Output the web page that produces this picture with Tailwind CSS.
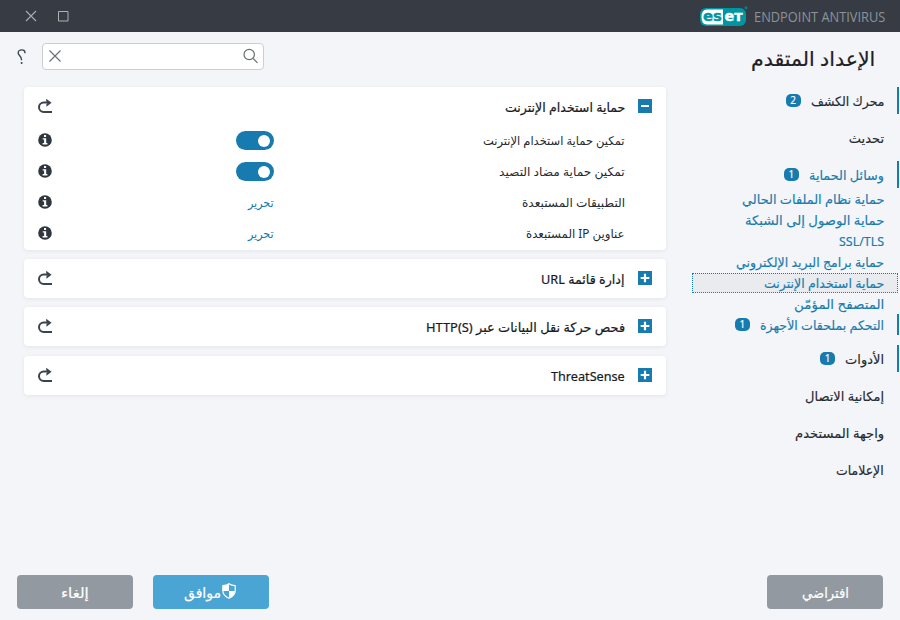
<!DOCTYPE html>
<html lang="ar" dir="rtl">
<head>
  <meta charset="UTF-8"/>
  <meta name="viewport" content="width=device-width, initial-scale=1.0"/>
  <title>ESET Endpoint Antivirus</title>
  <script src="https://cdn.jsdelivr.net/npm/@tailwindcss/browser@4"></script>
</head>
<body class="bg-[#f3f5f8] h-[620px] w-[900px] overflow-hidden flex flex-col text-[#252a30] text-[13px] font-['Noto_Sans','DejaVu_Sans',sans-serif]">

  <!-- Shared icons -->
  <svg class="hidden">
    <symbol id="reset" viewBox="0 0 14 16">
      <path d="M14 14H5.7A4.7 4.7 0 0 1 5.7 4.6H11" fill="none" stroke="#3b444d" stroke-width="2"/>
      <path d="M8.2 .8L13.6 4.8L8.4 8.8V6L10 4.8L8.2 3.2Z" fill="#3b444d"/>
    </symbol>
    <symbol id="info" viewBox="0 0 14 14">
      <circle cx="7" cy="7" r="6.8" fill="#30363d"/>
      <path d="M6 2h2.1v2H6zM4.7 5.2h3.5v4.9h1.2v1.4H4.6v-1.4h1.5V6.6H4.7z" fill="#fff"/>
    </symbol>
    <symbol id="plus" viewBox="0 0 14 14">
      <path d="M0 0h14v14H0z" fill="#177baf"/>
      <path d="M2.7 7h8.6M7 2.7v8.6" stroke="#fff" stroke-width="2.2"/>
    </symbol>
  </svg>

  <!-- Title bar -->
  <header class="h-8 shrink-0 bg-[#373c44] flex items-center justify-between pr-[15px] pl-[25px]">
    <div class="flex items-center gap-[5px]">
      <span dir="ltr" class="pt-px font-['Open_Sans'] text-[14px] text-[#8d9299]" data-w="131">ENDPOINT ANTIVIRUS</span>
      <svg class="w-[50px] h-5 [direction:ltr]" viewBox="0 0 50 20">
        <rect x="1" y="2" width="46" height="18" rx="6" fill="#0096a1"/>
        <path d="M8 3.5H24V18.5H8Q2.5 18.5 2.5 11T8 3.5Z" fill="#fff"/>
        <circle cx="47" cy="1.8" r="1.5" fill="#0c7e88"/>
        <text x="4" y="15" textLength="19" lengthAdjust="spacingAndGlyphs" font-family="DejaVu Sans" font-weight="bold" font-size="14" fill="#0096a1" stroke="#0096a1" stroke-width=".4">es</text>
        <text x="25.5" y="15" textLength="18" lengthAdjust="spacingAndGlyphs" font-family="DejaVu Sans" font-weight="bold" font-size="14" fill="#fff" stroke="#fff" stroke-width=".4">eт</text>
      </svg>
    </div>
    <div class="flex items-center gap-[21px]">
      <svg class="size-[11px]" viewBox="0 0 11 11"><path d="M.5.5h9.5v9.5H.5z" fill="none" stroke="#b0b2b0"/></svg>
      <svg class="size-[12px]" viewBox="0 0 12 12"><path d="M1 1l10 10M11 1L1 11" stroke="#a9aba8" stroke-width="1.2"/></svg>
    </div>
  </header>

  <div class="flex flex-1">
    <!-- Navigation -->
    <aside class="w-[210px] shrink-0 flex flex-col">
      <h1 class="h-[55px] pr-[25px] pt-[12px] text-[20px] leading-[30px] text-[#1d2024] [-webkit-text-stroke:0.2px]"><span data-w="124">الإعداد المتقدم</span></h1>
      <nav class="flex flex-col gap-[10px] mr-px [-webkit-text-stroke:0.15px]">
        <a class="h-[27px] flex items-center gap-[10px] border-r-2 border-[#177baf] pr-[13px] pt-[3px]"><span data-w="73">محرك الكشف</span><b class="w-[15px] h-[13px] mb-1 rounded-[5px] bg-[#177baf] text-white text-[10px] leading-[13px] text-center font-normal">2</b></a>
        <a class="h-[27px] flex items-center pr-[15px] pt-0.5"><span data-w="35">تحديث</span></a>
        <div class="text-[#177baf]">
          <a class="h-[27px] flex items-center gap-[10px] border-r-2 border-[#177baf] pr-[13px] pt-[3px]"><span data-w="75">وسائل الحماية</span><b class="w-[15px] h-[13px] mb-1 rounded-[5px] bg-[#177baf] text-white text-[10px] leading-[13px] text-center font-normal">1</b></a>
          <a class="h-[21px] flex items-center pr-[15px] pt-0.5"><span data-w="142">حماية نظام الملفات الحالي</span></a>
          <a class="h-[21px] flex items-center pr-[15px] pt-0.5"><span data-w="139">حماية الوصول إلى الشبكة</span></a>
          <a class="h-[21px] flex items-center pr-[15px] pt-0.5"><span data-w="45">SSL/TLS</span></a>
          <a class="h-[21px] flex items-center pr-[15px] pt-0.5"><span data-w="148">حماية برامج البريد الإلكتروني</span></a>
          <a class="h-[20px] mt-px mr-px w-[206px] flex items-center pr-[13px] pt-px border border-dotted border-[#177baf] bg-[#e9ebee]"><span data-w="120">حماية استخدام الإنترنت</span></a>
          <a class="h-[21px] flex items-center pr-[15px] pt-0.5"><span data-w="90">المتصفح المؤمّن</span></a>
          <a class="h-[21px] flex items-center gap-[10px] border-r-2 border-[#177baf] pr-[13px] pt-[3px]"><span data-w="124">التحكم بملحقات الأجهزة</span><b class="w-[15px] h-[13px] mb-1 rounded-[5px] bg-[#177baf] text-white text-[10px] leading-[13px] text-center font-normal">1</b></a>
        </div>
        <a class="h-[27px] flex items-center gap-[10px] border-r-2 border-[#177baf] pr-[13px] pt-[3px]"><span data-w="39">الأدوات</span><b class="w-[15px] h-[13px] mb-1 rounded-[5px] bg-[#177baf] text-white text-[10px] leading-[13px] text-center font-normal">1</b></a>
        <a class="h-[27px] flex items-center pr-[15px] pt-0.5"><span data-w="79">إمكانية الاتصال</span></a>
        <a class="h-[27px] flex items-center pr-[15px] pt-0.5"><span data-w="89">واجهة المستخدم</span></a>
        <a class="h-[27px] flex items-center pr-[15px] pt-0.5"><span data-w="48">الإعلامات</span></a>
      </nav>
    </aside>

    <!-- Settings -->
    <main class="w-[642px] mr-6 flex flex-col">
      <div class="h-[55px] flex justify-end items-start gap-4 pt-[11px] -ml-[7px]">
        <div class="w-[222px] h-[27px] bg-white border border-[#ccced0] rounded-[4px] flex items-center justify-between px-[5px] pb-0.5">
          <svg class="size-4" viewBox="0 0 16 16" fill="none" stroke="#686b6e" stroke-width="1.2"><circle cx="7.2" cy="6.5" r="5.2"/><path d="M11 10.3L15.5 14.8"/></svg>
          <svg class="size-[13px]" viewBox="0 0 13 13"><path d="M1.5 1.5l11 11M12.5 1.5L1.5 12.5" stroke="#6c6f72" stroke-width="1.2"/></svg>
        </div>
        <svg class="w-[9px] h-4 mt-[6px]" viewBox="0 0 9 16"><path d="M8 4.3C8.1 1.7 6.7.9 4.8.9C2.5.9 1.2 2.1 1.2 4C1.2 6.9 4.6 6.4 4.6 11.2" fill="none" stroke="#3b4650" stroke-width="1.4"/><circle cx="4.6" cy="14" r="1" fill="#3b4650"/></svg>
      </div>

      <section class="h-[163px] bg-white rounded-[4px] shadow-[0_1px_4px_rgba(0,0,0,0.07)] px-[14px]">
        <div class="h-[38px] flex items-center gap-[13px]">
          <svg class="size-[14px]" viewBox="0 0 14 14"><path d="M0 0h14v14H0z" fill="#177baf"/><path d="M3 7h8" stroke="#fff" stroke-width="2"/></svg>
          <h2 class="pt-[3px] text-[#171a1e] [-webkit-text-stroke:0.2px]"><span data-w="120">حماية استخدام الإنترنت</span></h2>
          <svg class="w-[14px] h-4 mr-auto"><use href="#reset"/></svg>
        </div>
        <div class="h-[31px] flex items-center pr-[27px] text-[12px]">
          <div class="w-[351px]"><span data-w="142">تمكين حماية استخدام الإنترنت</span></div>
          <div class="w-[38px] h-[19px] rounded-full bg-[#177baf] flex items-center pr-1"><i class="size-3 rounded-full bg-white"></i></div>
          <svg class="size-[14px] mr-auto mb-px"><use href="#info"/></svg>
        </div>
        <div class="h-[31px] flex items-center pr-[27px] text-[12px]">
          <div class="w-[351px]"><span data-w="126">تمكين حماية مضاد التصيد</span></div>
          <div class="w-[38px] h-[19px] rounded-full bg-[#177baf] flex items-center pr-1"><i class="size-3 rounded-full bg-white"></i></div>
          <svg class="size-[14px] mr-auto mb-px"><use href="#info"/></svg>
        </div>
        <div class="h-[31px] flex items-center pr-[27px] text-[12px]">
          <div class="w-[351px]"><span data-w="103">التطبيقات المستبعدة</span></div>
          <a class="text-[#177baf]"><span data-w="26">تحرير</span></a>
          <svg class="size-[14px] mr-auto mb-px"><use href="#info"/></svg>
        </div>
        <div class="h-[31px] flex items-center pr-[27px] text-[12px]">
          <div class="w-[351px]"><span data-w="99">عناوين IP المستبعدة</span></div>
          <a class="text-[#177baf]"><span data-w="26">تحرير</span></a>
          <svg class="size-[14px] mr-auto mb-px"><use href="#info"/></svg>
        </div>
      </section>

      <section class="h-[39px] mt-[9px] bg-white rounded-[4px] shadow-[0_1px_4px_rgba(0,0,0,0.07)] px-[14px] flex items-center gap-[13px] text-[#171a1e]">
        <svg class="size-[14px] mb-px"><use href="#plus"/></svg>
        <h2 class="pt-[3px] [-webkit-text-stroke:0.2px]"><span data-w="84">إدارة قائمة URL</span></h2>
        <svg class="w-[14px] h-4 mr-auto mb-px"><use href="#reset"/></svg>
      </section>
      <section class="h-[39px] mt-[9px] bg-white rounded-[4px] shadow-[0_1px_4px_rgba(0,0,0,0.07)] px-[14px] flex items-center gap-[13px] text-[#171a1e]">
        <svg class="size-[14px] mb-px"><use href="#plus"/></svg>
        <h2 class="pt-[3px] [-webkit-text-stroke:0.2px]"><span data-w="199">فحص حركة نقل البيانات عبر HTTP(S)</span></h2>
        <svg class="w-[14px] h-4 mr-auto mb-px"><use href="#reset"/></svg>
      </section>
      <section class="h-[39px] mt-[10px] bg-white rounded-[4px] shadow-[0_1px_4px_rgba(0,0,0,0.07)] px-[14px] flex items-center gap-[13px] text-[#171a1e]">
        <svg class="size-[14px] mb-px"><use href="#plus"/></svg>
        <h2 class="pt-[3px] [-webkit-text-stroke:0.2px]"><span data-w="74">ThreatSense</span></h2>
        <svg class="w-[14px] h-4 mr-auto mb-px"><use href="#reset"/></svg>
      </section>
    </main>
  </div>

  <!-- Buttons -->
  <footer class="h-[45px] shrink-0 flex items-start px-[17px] gap-5 text-white text-[14px] [-webkit-text-stroke:0.2px]">
    <button class="w-[116px] h-[34px] rounded-[4px] bg-[#9299a0] flex items-center justify-center ml-auto"><span data-w="47">افتراضي</span></button>
    <button class="w-[116px] h-[34px] rounded-[4px] bg-[#4ba5d4] flex items-center justify-center gap-px pr-0.5">
      <svg class="w-[14px] h-4 mb-0.5" viewBox="0 0 14 16"><path d="M7 .7C5 2.2 3 2.6 .8 2.7V7.5C.8 11.5 4 14 7 15.3C10 14 13.2 11.5 13.2 7.5V2.7C11 2.6 9 2.2 7 .7Z" fill="none" stroke="#fff" stroke-width="1.2"/><path d="M7 1V8H1V3Q5 3 7 1ZM7 8H13Q12.5 12.5 7 15Z" fill="#fff"/></svg>
      <span data-w="37">موافق</span>
    </button>
    <button class="w-[116px] h-[34px] rounded-[4px] bg-[#9299a0] flex items-center justify-center"><span data-w="28">إلغاء</span></button>
  </footer>

  <script>
    // Condense or widen each label to its design width
    function fitLabels() {
      document.querySelectorAll("[data-w]").forEach(el => {
        el.style.display = "block";
        el.style.whiteSpace = "nowrap";
        el.style.width = "max-content";
        const natural = el.offsetWidth;
        el.style.transformOrigin = "right center";
        el.style.transform = `scaleX(${el.dataset.w / natural})`;
        el.style.marginLeft = `${el.dataset.w - natural}px`;
      });
    }
    window.addEventListener("load", fitLabels);
  </script>
</body>
</html>
